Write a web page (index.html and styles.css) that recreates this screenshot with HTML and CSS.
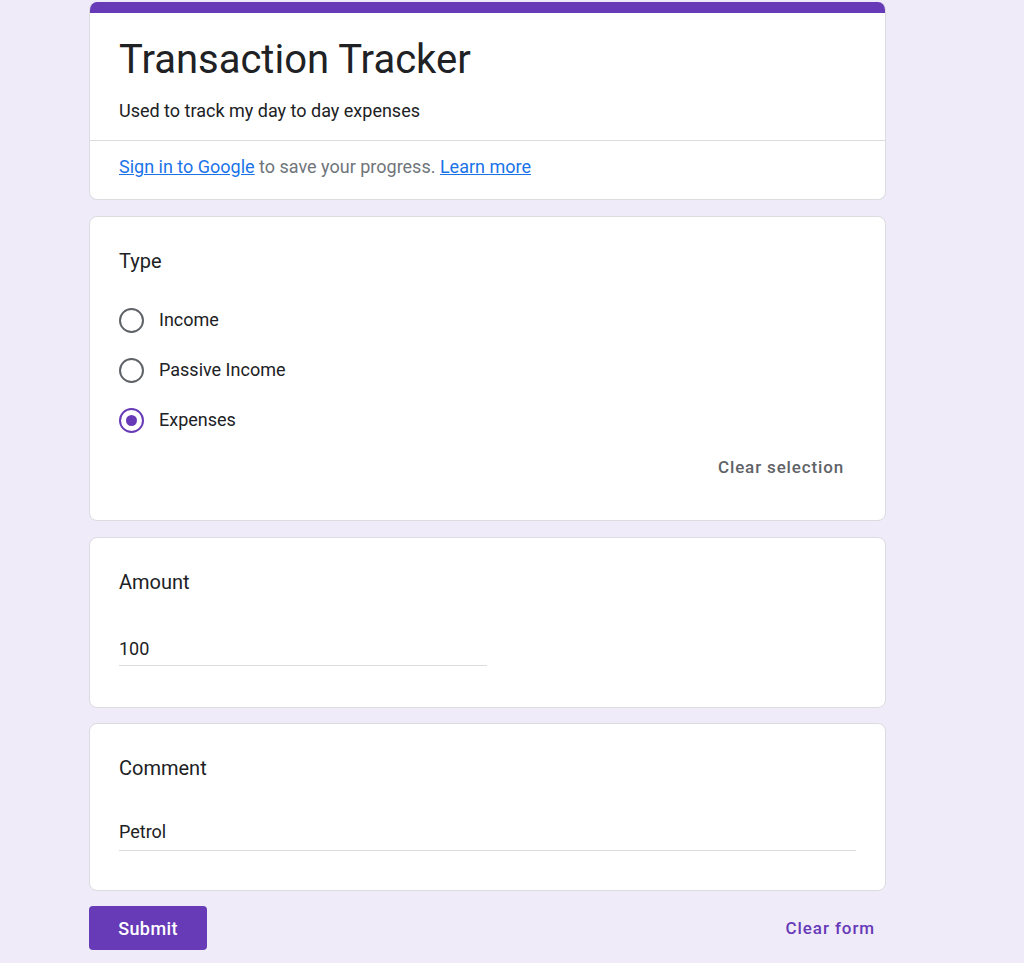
FILE: index.html
```html
<!DOCTYPE html>
<html lang="en">
<head>
<meta charset="utf-8">
<title>Transaction Tracker</title>
<link rel="stylesheet" href="styles.css">
</head>
<body>
<main class="form">
  <section class="card header-card">
    <div class="accent"></div>
    <div class="header-main">
      <h1 class="title">Transaction Tracker</h1>
      <p class="desc">Used to track my day to day expenses</p>
    </div>
    <div class="signin">
      <a href="#" class="link">Sign in to Google</a> to save your progress. <a href="#" class="link">Learn more</a>
    </div>
  </section>

  <section class="card question">
    <div class="q-title">Type</div>
    <div class="options">
      <label class="option"><span class="radio"></span><span class="opt-label">Income</span></label>
      <label class="option"><span class="radio"></span><span class="opt-label">Passive Income</span></label>
      <label class="option"><span class="radio checked"></span><span class="opt-label">Expenses</span></label>
    </div>
    <div class="clear-row"><span class="clear-sel">Clear selection</span></div>
  </section>

  <section class="card question amount">
    <div class="q-title">Amount</div>
    <div class="answer short">100</div>
  </section>

  <section class="card question comment">
    <div class="q-title">Comment</div>
    <div class="answer long">Petrol</div>
  </section>

  <div class="actions">
    <button class="submit">Submit</button>
    <span class="clear-form">Clear form</span>
  </div>
</main>
</body>
</html>
```

FILE: styles.css
```css
* { box-sizing: border-box; }
html, body { margin: 0; padding: 0; }
body {
  background: #f0ebf8;
  font-family: Roboto, "Liberation Sans", Arial, sans-serif;
  color: #202124;
  height: 963px;
  overflow: hidden;
}
.form {
  width: 797px;
  margin-left: 89px;
  padding-top: 2px;
  display: flex;
  flex-direction: column;
  gap: 16px;
}
.card {
  background: #fff;
  border: 1px solid #dadce0;
  border-radius: 8px;
}
.header-card {
  border-top: none;
  overflow: hidden;
}
.accent {
  height: 11px;
  background: #673ab7;
  margin: 0 -1px;
}
.header-main {
  padding: 23px 29px 17px;
  border-bottom: 1px solid #dadce0;
}
.title {
  margin: 0;
  font-size: 40px;
  font-weight: 400;
  line-height: 48px;
  color: #202124;
}
.desc {
  margin: 15px 0 0;
  font-size: 18px;
  line-height: 24px;
}
.signin {
  padding: 14px 29px 20px;
  font-size: 18px;
  line-height: 24px;
  color: #70757a;
}
.link {
  color: #1a73e8;
  text-decoration: underline;
}
.question {
  padding: 32px 29px 31px;
}
.q-title {
  font-size: 20px;
  line-height: 24px;
  color: #202124;
}
.options {
  margin-top: 22px;
  display: flex;
  flex-direction: column;
}
.option {
  height: 50px;
  display: flex;
  align-items: center;
  gap: 15px;
}
.radio {
  width: 25px;
  height: 25px;
  border: 2px solid #5f6368;
  border-radius: 50%;
  display: flex;
  align-items: center;
  justify-content: center;
  flex: none;
}
.radio.checked {
  border-color: #673ab7;
}
.radio.checked::after {
  content: "";
  width: 11px;
  height: 11px;
  border-radius: 50%;
  background: #673ab7;
}
.opt-label {
  font-size: 18px;
  line-height: 24px;
  color: #202124;
}
.clear-row {
  height: 44px;
  display: flex;
  align-items: center;
  justify-content: flex-end;
  padding-right: 12px;
}
.clear-sel {
  font-size: 17px;
  font-weight: 500;
  color: #5f6368;
  letter-spacing: 0.85px;
}
.answer {
  font-size: 18px;
  line-height: 24px;
  color: #202124;
  border-bottom: 1px solid #dadce0;
}
.answer.short {
  margin-top: 43px;
  width: 368px;
  padding-bottom: 4px;
}
.amount { padding-bottom: 41px; }
.comment { padding-bottom: 39px; margin-top: -1px; }
.answer.long {
  margin-top: 40px;
  padding-bottom: 6px;
  width: 737px;
}
.actions {
  margin-top: -1px;
  display: flex;
  justify-content: space-between;
  align-items: center;
}
.submit {
  width: 118px;
  height: 44px;
  background: #673ab7;
  color: #fff;
  border: none;
  border-radius: 4px;
  font-family: Roboto, "Liberation Sans", Arial, sans-serif;
  font-size: 18px;
  font-weight: 500;
  letter-spacing: 0.4px;
}
.clear-form {
  margin-right: 11px;
  font-size: 17px;
  font-weight: 500;
  color: #673ab7;
  letter-spacing: 0.9px;
}
```
